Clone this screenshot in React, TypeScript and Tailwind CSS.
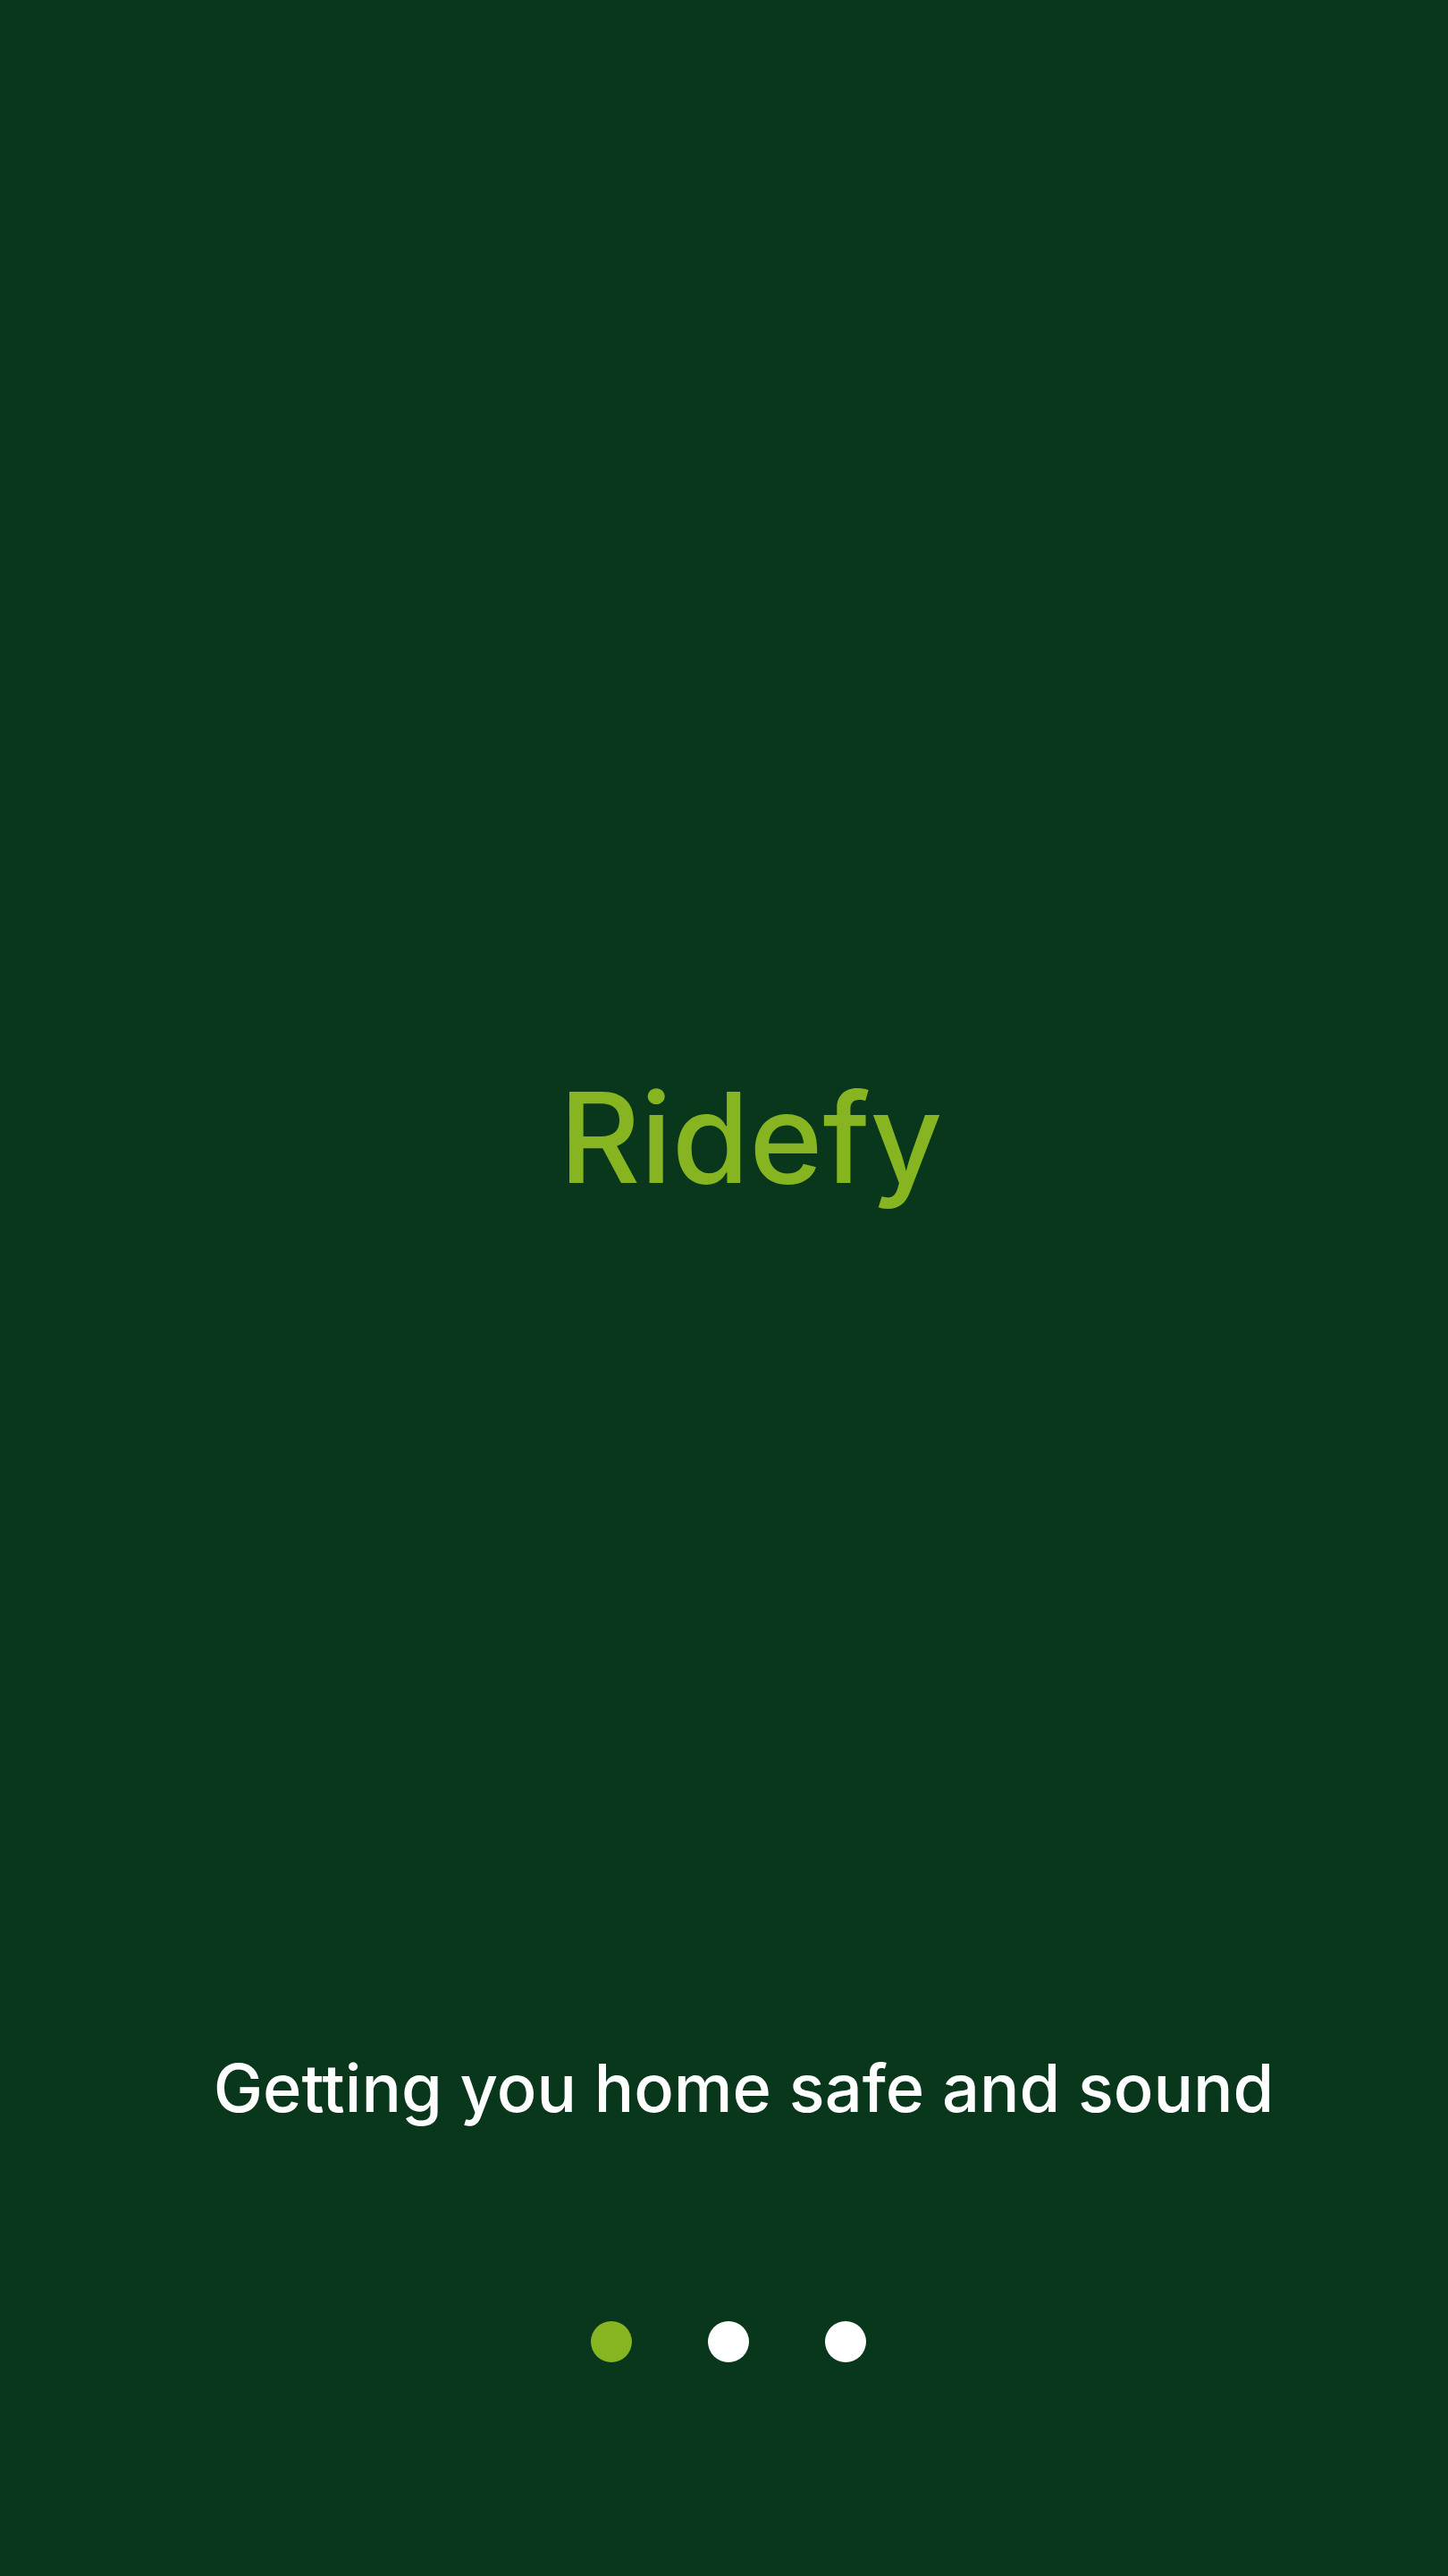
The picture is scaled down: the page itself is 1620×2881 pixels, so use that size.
const slides = ["Welcome", "Ride", "Arrive"];

export default function App() {
  return (
    <main className="flex min-h-screen flex-col bg-[#09371b] font-['Inter',sans-serif] font-medium">
      <header className="flex flex-1 items-center justify-center pt-[252px] pl-[60px]">
        <h1 className="text-[140px] leading-[176px] font-medium text-[#87b521]">Ridefy</h1>
      </header>
      <div className="flex flex-col items-center pb-[239px]">
        <p className="pl-11 text-center text-[74px] leading-[88px] text-white">
          Getting you home safe and sound
        </p>
        <nav aria-label="Slides" className="mt-[217px] flex gap-[85px] pl-[9px]">
          {slides.map((slide, i) => (
            <button
              key={slide}
              type="button"
              aria-label={slide}
              aria-current={i === 0}
              className={i === 0 ? "size-[46px] rounded-full bg-[#87b521]" : "size-[46px] rounded-full bg-white"}
            />
          ))}
        </nav>
      </div>
    </main>
  );
}
